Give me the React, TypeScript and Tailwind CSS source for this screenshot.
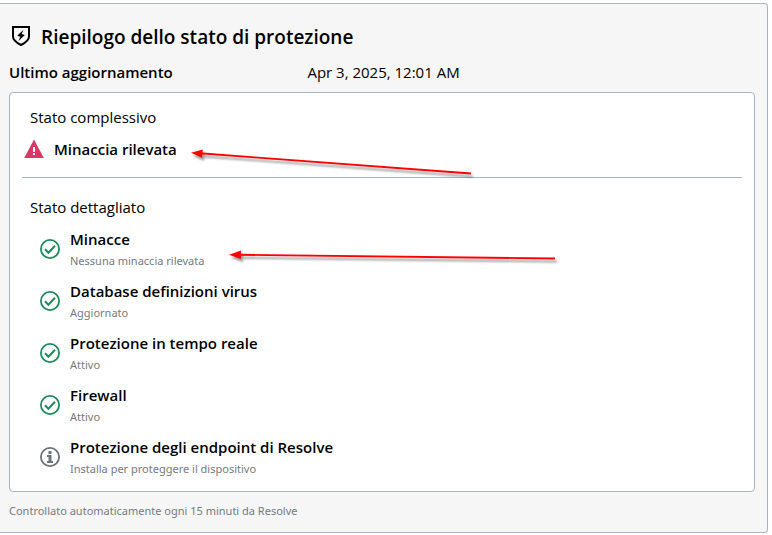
interface StatusItem {
  title: string
  detail: string
  ok: boolean
}

const items: StatusItem[] = [
  { title: 'Minacce', detail: 'Nessuna minaccia rilevata', ok: true },
  { title: 'Database definizioni virus', detail: 'Aggiornato', ok: true },
  { title: 'Protezione in tempo reale', detail: 'Attivo', ok: true },
  { title: 'Firewall', detail: 'Attivo', ok: true },
  {
    title: 'Protezione degli endpoint di Resolve',
    detail: 'Installa per proteggere il dispositivo',
    ok: false,
  },
]

const ShieldIcon = () => (
  <svg className="h-6 w-6 shrink-0" viewBox="0 0 24 24" aria-hidden="true">
    <path
      d="M4 2h16v9.500c0 3.600-3 6-8 8.500c-5-2.500-8-4.900-8-8.500z"
      fill="none"
      stroke="#000"
      strokeWidth="2"
    />
    <path d="M14.500 4.800L8.200 10.800l3.100 1-1.800 4.200 6.300-6-3.100-1z" fill="#000" />
  </svg>
)

const WarningIcon = () => (
  <svg className="h-5 w-5 shrink-0" viewBox="0 0 20 20" aria-hidden="true">
    <path d="M10 0.500L19.800 19H0.200z" fill="#d63a64" />
    <path d="M9 8h2v5H9zM9 14h2v2H9z" fill="#fff" />
  </svg>
)

const CheckIcon = () => (
  <svg className="h-5 w-5 shrink-0" viewBox="0 0 20 20" fill="none" stroke="#1f8a5b" aria-hidden="true">
    <circle cx="10" cy="10" r="9.100" strokeWidth="1.800" />
    <path d="M5 10.300l3.400 3.400 6.600-7" strokeWidth="2" />
  </svg>
)

const InfoIcon = () => (
  <svg className="h-5 w-5 shrink-0" viewBox="0 0 20 20" aria-hidden="true">
    <circle cx="10" cy="10" r="9.100" fill="none" stroke="#6c7278" strokeWidth="1.800" />
    <path d="M8.500 4h3v3h-3zM7 8h4.500v6H13v2H7v-2h1.500v-4H7z" fill="#6c7278" />
  </svg>
)

// Red pointers laid over the card
const Arrows = () => (
  <svg
    className="pointer-events-none absolute top-0 left-0 drop-shadow-[2px_3px_1px_rgba(0,0,0,0.4)]"
    width="600"
    height="300"
    viewBox="0 0 600 300"
    fill="#f00"
    stroke="#f00"
    aria-hidden="true"
  >
    <path d="M200 153.300L471 173.500" strokeWidth="1.900" />
    <path d="M191 152.800L202.800 149.400L202 157.800z" stroke="none" />
    <path d="M238 254.800L555 258.500" strokeWidth="1.900" />
    <path d="M229 254.700L241 250.600V258.900z" stroke="none" />
  </svg>
)

const App = () => {
  return (
    <main className="relative bg-white pt-[3px] pr-1 font-['Open_Sans','Noto_Sans',sans-serif] text-[15px] leading-6 text-black">
      <section className="rounded-r border-y border-r border-[#a4b6c6] bg-[#f6f6f6] pt-[19px] pr-3 pb-[11px] pl-[9px]">
        <div className="flex items-center gap-2">
          <ShieldIcon />
          <h1 className="text-[19px] leading-7 font-semibold">Riepilogo dello stato di protezione</h1>
        </div>

        <dl className="mt-[9px] grid grid-cols-[2fr_3fr]">
          <dt className="font-semibold">Ultimo aggiornamento</dt>
          <dd>Apr 3, 2025, 12:01 AM</dd>
        </dl>

        <div className="mt-2 rounded border border-[#a4b6c6] bg-white px-3 py-3">
          <h2 className="px-2">Stato complessivo</h2>
          <div className="mt-2 flex items-center gap-[10px] px-0.5">
            <WarningIcon />
            <span className="font-semibold">Minaccia rilevata</span>
          </div>

          <hr className="mt-4 border-[#a4b6c6]" />

          <h2 className="mt-[17px] px-2">Stato dettagliato</h2>
          <ul className="mt-2 flex flex-col gap-2 pl-[18px]">
            {items.map((item) => (
              <li key={item.title} className="flex items-center gap-[10px]">
                {item.ok ? <CheckIcon /> : <InfoIcon />}
                <div>
                  <h3 className="font-semibold">{item.title}</h3>
                  <p className="font-['Noto_Sans',sans-serif] text-[11px] leading-5 text-[#757b80]">{item.detail}</p>
                </div>
              </li>
            ))}
          </ul>
        </div>

        <p className="mt-[9px] font-['Noto_Sans',sans-serif] text-[11px] leading-5 text-[#757b80]">
          Controllato automaticamente ogni 15 minuti da Resolve
        </p>
      </section>
      <Arrows />
    </main>
  )
}

export default App
